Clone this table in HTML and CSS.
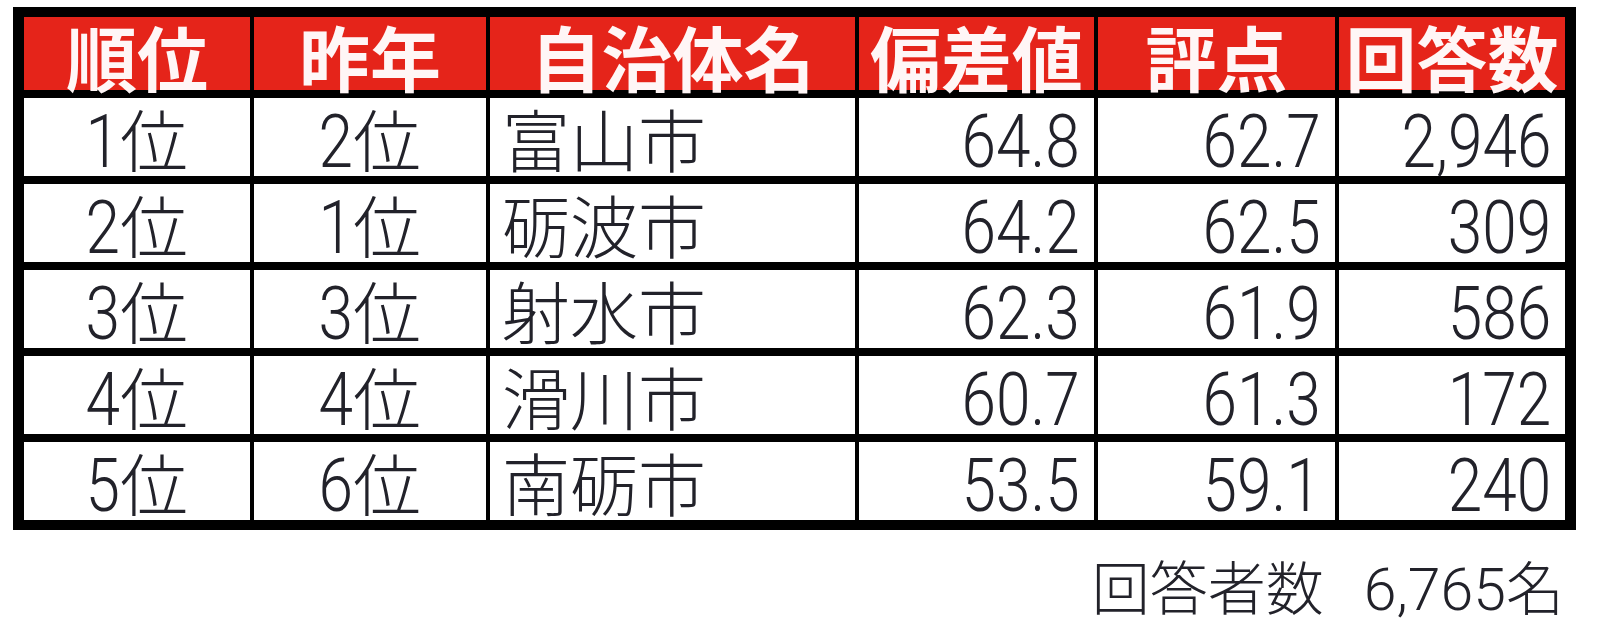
FILE: index.html
```html
<!DOCTYPE html>
<html lang="ja">
<head>
<meta charset="utf-8">
<title>ランキング</title>
<link rel="stylesheet" href="styles.css">
</head>
<body>
<div class="page">
  <div class="ranking">
    <div class="head">順位</div>
    <div class="head">昨年</div>
    <div class="head">自治体名</div>
    <div class="head">偏差値</div>
    <div class="head">評点</div>
    <div class="head">回答数</div>

    <div class="cell c"><span class="num one">1</span>位</div>
    <div class="cell c"><span class="num one">2</span>位</div>
    <div class="cell l">富山市</div>
    <div class="cell r"><span class="num">64.8</span></div>
    <div class="cell r"><span class="num">62.7</span></div>
    <div class="cell r"><span class="num">2,946</span></div>

    <div class="cell c"><span class="num one">2</span>位</div>
    <div class="cell c"><span class="num one">1</span>位</div>
    <div class="cell l">砺波市</div>
    <div class="cell r"><span class="num">64.2</span></div>
    <div class="cell r"><span class="num">62.5</span></div>
    <div class="cell r"><span class="num">309</span></div>

    <div class="cell c"><span class="num one">3</span>位</div>
    <div class="cell c"><span class="num one">3</span>位</div>
    <div class="cell l">射水市</div>
    <div class="cell r"><span class="num">62.3</span></div>
    <div class="cell r"><span class="num">61.9</span></div>
    <div class="cell r"><span class="num">586</span></div>

    <div class="cell c"><span class="num one">4</span>位</div>
    <div class="cell c"><span class="num one">4</span>位</div>
    <div class="cell l">滑川市</div>
    <div class="cell r"><span class="num">60.7</span></div>
    <div class="cell r"><span class="num">61.3</span></div>
    <div class="cell r"><span class="num">172</span></div>

    <div class="cell c"><span class="num one">5</span>位</div>
    <div class="cell c"><span class="num one">6</span>位</div>
    <div class="cell l">南砺市</div>
    <div class="cell r"><span class="num">53.5</span></div>
    <div class="cell r"><span class="num">59.1</span></div>
    <div class="cell r"><span class="num">240</span></div>
  </div>
  <div class="footer">
    <span class="label">回答者数</span>
    <span class="total"><span class="fig">6,765</span>名</span>
  </div>
</div>
</body>
</html>
```

FILE: styles.css
```css
html, body {
  margin: 0;
  padding: 0;
  background: #ffffff;
}

body {
  width: 1600px;
  height: 640px;
  overflow: hidden;
  font-family: "Noto Sans CJK JP", "Liberation Sans", sans-serif;
  color: #22222a;
}

.page {
  padding: 7px 0 0 13px;
}

.ranking {
  display: grid;
  grid-template-columns: 226px 232px 365px 235px 237px 226px;
  grid-template-rows: 73px repeat(5, 78px);
  column-gap: 4px;
  row-gap: 8px;
  padding: 10px 11px;
  width: max-content;
  background: #000000;
}

.head {
  background: #e5241a;
  color: #fff6f6;
  font-weight: 700;
  font-size: 71px;
  line-height: 69px;
  text-align: center;
  white-space: nowrap;
  padding-top: 4px;
  box-sizing: border-box;
}

.cell {
  background: #ffffff;
  font-size: 68px;
  font-weight: 300;
  line-height: 76px;
  white-space: nowrap;
  box-sizing: border-box;
  padding-top: 2px;
}

.c {
  text-align: center;
}

.l {
  text-align: left;
  padding-left: 12px;
}

.r {
  text-align: right;
  padding-right: 14px;
}

.num {
  display: inline-block;
  font-family: Roboto, "Liberation Sans", sans-serif;
  font-weight: 300;
  font-size: 74px;
  line-height: 76px;
  transform: scaleX(0.84);
  transform-origin: right center;
}

.num.one {
  margin-left: -7px;
}

.footer {
  display: flex;
  justify-content: flex-end;
  align-items: baseline;
  gap: 40px;
  width: 1551px;
  margin-top: 22px;
  font-size: 58px;
  font-weight: 300;
  line-height: 66px;
  color: #22222a;
}

.fig {
  font-family: Roboto, "Liberation Sans", sans-serif;
  font-weight: 300;
  font-size: 59px;
}
```
